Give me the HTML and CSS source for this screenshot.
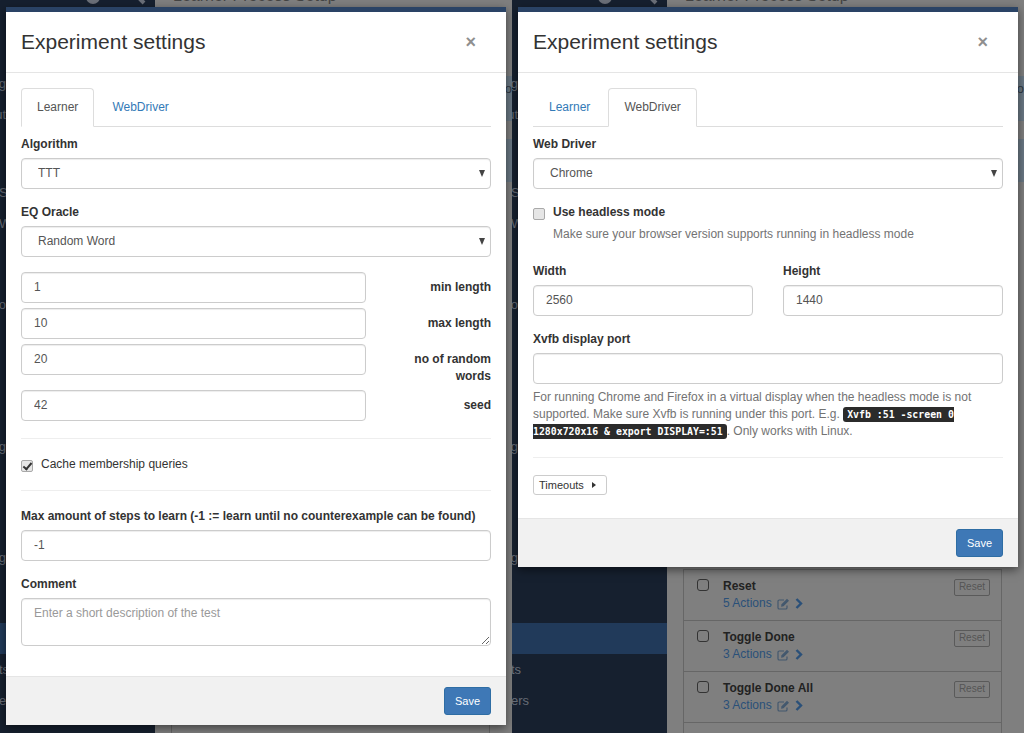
FILE: index.html
```html
<!DOCTYPE html>
<html lang="en">
<head>
    <meta charset="UTF-8">
    <meta name="viewport" content="width=device-width, initial-scale=1.0">
    <title>Experiment settings</title>
    <link rel="stylesheet" href="styles.css">
</head>
<body>
    <div class="page">
        <!-- learner tab -->
        <section class="screen">
            <div class="backdrop">
                <aside class="sidebar">
                    <div class="sidebar-icons">
                        <svg width="16" height="16" viewBox="0 0 16 16"><circle cx="8" cy="8" r="7" fill="#6a6f78"/><circle cx="8" cy="8" r="2.5" fill="#16202f"/></svg>
                        <svg width="16" height="16" viewBox="0 0 16 16"><path d="M2 2l12 12" stroke="#6a6f78" stroke-width="4" fill="none"/></svg>
                    </div>
                    <nav class="nav-group group-account">
                        <a class="nav-link">Learning</a>
                        <a class="nav-link">Logout</a>
                    </nav>
                    <nav class="nav-group group-setup">
                        <a class="nav-link nav-start">Settings</a>
                        <a class="nav-link nav-start">Web</a>
                    </nav>
                    <nav class="nav-group group-tools">
                        <a class="nav-link">Info</a>
                    </nav>
                    <nav class="nav-group group-model">
                        <a class="nav-link">Testing</a>
                    </nav>
                    <nav class="nav-group group-debug">
                        <a class="nav-link">Debug</a>
                    </nav>
                    <nav class="nav-group group-learner">
                        <a class="nav-link active">Setup</a>
                        <a class="nav-link nav-short">Results</a>
                        <a class="nav-link nav-long">Counters</a>
                    </nav>
                </aside>
                <main class="main">
                    <h2 class="page-title">Learner Process Setup</h2>
                    <div class="strip strip-top">Vo</div>
                    <div class="strip strip-bottom"></div>
                    <ul class="symbols">
                        <li class="symbol"><span class="symbol-check"></span><div class="symbol-body"><strong>Reset</strong><span class="symbol-actions">5 Actions</span></div><span class="symbol-reset">Reset</span></li>
                        <li class="symbol"><span class="symbol-check"></span><div class="symbol-body"><strong>Toggle Done</strong><span class="symbol-actions">3 Actions</span></div><span class="symbol-reset">Reset</span></li>
                        <li class="symbol"><span class="symbol-check"></span><div class="symbol-body"><strong>Toggle Done All</strong><span class="symbol-actions">3 Actions</span></div><span class="symbol-reset">Reset</span></li>
                        <li class="symbol"></li>
                    </ul>
                </main>
            </div>

            <div class="modal">
                <div class="modal-header">
                    <h4 class="modal-title">Experiment settings</h4>
                    <button class="close" type="button">&times;</button>
                </div>
                <div class="modal-body">
                    <ul class="tabs">
                        <li class="tab active">Learner</li>
                        <li class="tab">WebDriver</li>
                    </ul>
                    <div class="form-group">
                        <label class="field-label" for="algorithm">Algorithm</label>
                        <div class="select-wrap">
                            <select id="algorithm" class="control"><option>TTT</option></select>
                        </div>
                    </div>
                    <div class="form-group">
                        <label class="field-label" for="oracle">EQ Oracle</label>
                        <div class="select-wrap">
                            <select id="oracle" class="control"><option>Random Word</option></select>
                        </div>
                    </div>
                    <div class="param-rows">
                        <div class="param-row">
                            <input class="control" type="text" value="1">
                            <label class="param-label">min length</label>
                        </div>
                        <div class="param-row">
                            <input class="control" type="text" value="10">
                            <label class="param-label">max length</label>
                        </div>
                        <div class="param-row">
                            <input class="control" type="text" value="20">
                            <label class="param-label">no of random words</label>
                        </div>
                        <div class="param-row">
                            <input class="control" type="text" value="42">
                            <label class="param-label">seed</label>
                        </div>
                    </div>
                    <hr>
                    <label class="check-row">
                        <input class="check" type="checkbox" checked>
                        <span>Cache membership queries</span>
                    </label>
                    <hr>
                    <div class="form-group">
                        <label class="field-label" for="max-steps">Max amount of steps to learn (-1 := learn until no counterexample can be found)</label>
                        <input id="max-steps" class="control" type="text" value="-1">
                    </div>
                    <div class="form-group">
                        <label class="field-label" for="comment">Comment</label>
                        <textarea id="comment" class="control" placeholder="Enter a short description of the test"></textarea>
                    </div>
                </div>
                <div class="modal-footer">
                    <button class="btn-save" type="button">Save</button>
                </div>
            </div>
        </section>

        <!-- webdriver tab -->
        <section class="screen">
            <div class="backdrop">
                <aside class="sidebar">
                    <div class="sidebar-icons">
                        <svg width="16" height="16" viewBox="0 0 16 16"><circle cx="8" cy="8" r="7" fill="#6a6f78"/><circle cx="8" cy="8" r="2.5" fill="#16202f"/></svg>
                        <svg width="16" height="16" viewBox="0 0 16 16"><path d="M2 2l12 12" stroke="#6a6f78" stroke-width="4" fill="none"/></svg>
                    </div>
                    <nav class="nav-group group-account">
                        <a class="nav-link">Learning</a>
                        <a class="nav-link">Logout</a>
                    </nav>
                    <nav class="nav-group group-setup">
                        <a class="nav-link nav-start">Settings</a>
                        <a class="nav-link nav-start">Web</a>
                    </nav>
                    <nav class="nav-group group-tools">
                        <a class="nav-link">Info</a>
                    </nav>
                    <nav class="nav-group group-model">
                        <a class="nav-link">Testing</a>
                    </nav>
                    <nav class="nav-group group-debug">
                        <a class="nav-link">Debug</a>
                    </nav>
                    <nav class="nav-group group-learner">
                        <a class="nav-link active">Setup</a>
                        <a class="nav-link nav-short">Results</a>
                        <a class="nav-link nav-long">Counters</a>
                    </nav>
                </aside>
                <main class="main">
                    <h2 class="page-title">Learner Process Setup</h2>
                    <div class="strip strip-top">Vo</div>
                    <div class="strip strip-bottom"></div>
                    <ul class="symbols">
                        <li class="symbol">
                            <span class="symbol-check"></span>
                            <div class="symbol-body">
                                <strong>Reset</strong>
                                <span class="symbol-actions">5 Actions
                                    <svg class="icon-edit" width="13" height="12" viewBox="0 0 13 12"><path d="M10 7.5v2.2A1.3 1.3 0 0 1 8.7 11H2.3A1.3 1.3 0 0 1 1 9.7V3.3A1.3 1.3 0 0 1 2.3 2H7" fill="none" stroke="currentColor" stroke-width="1.2"/><path d="M4.5 6.2L10 .8l2 2-5.5 5.5-2.4.4z" fill="currentColor"/></svg>
                                    <svg class="icon-chevron" width="8" height="11" viewBox="0 0 8 11"><path d="M1.5 1l4.5 4.5L1.5 10" fill="none" stroke="currentColor" stroke-width="2.4"/></svg>
                                </span>
                            </div>
                            <span class="symbol-reset">Reset</span>
                        </li>
                        <li class="symbol">
                            <span class="symbol-check"></span>
                            <div class="symbol-body">
                                <strong>Toggle Done</strong>
                                <span class="symbol-actions">3 Actions
                                    <svg class="icon-edit" width="13" height="12" viewBox="0 0 13 12"><path d="M10 7.5v2.2A1.3 1.3 0 0 1 8.7 11H2.3A1.3 1.3 0 0 1 1 9.7V3.3A1.3 1.3 0 0 1 2.3 2H7" fill="none" stroke="currentColor" stroke-width="1.2"/><path d="M4.5 6.2L10 .8l2 2-5.5 5.5-2.4.4z" fill="currentColor"/></svg>
                                    <svg class="icon-chevron" width="8" height="11" viewBox="0 0 8 11"><path d="M1.5 1l4.5 4.5L1.5 10" fill="none" stroke="currentColor" stroke-width="2.4"/></svg>
                                </span>
                            </div>
                            <span class="symbol-reset">Reset</span>
                        </li>
                        <li class="symbol">
                            <span class="symbol-check"></span>
                            <div class="symbol-body">
                                <strong>Toggle Done All</strong>
                                <span class="symbol-actions">3 Actions
                                    <svg class="icon-edit" width="13" height="12" viewBox="0 0 13 12"><path d="M10 7.5v2.2A1.3 1.3 0 0 1 8.7 11H2.3A1.3 1.3 0 0 1 1 9.7V3.3A1.3 1.3 0 0 1 2.3 2H7" fill="none" stroke="currentColor" stroke-width="1.2"/><path d="M4.5 6.2L10 .8l2 2-5.5 5.5-2.4.4z" fill="currentColor"/></svg>
                                    <svg class="icon-chevron" width="8" height="11" viewBox="0 0 8 11"><path d="M1.5 1l4.5 4.5L1.5 10" fill="none" stroke="currentColor" stroke-width="2.4"/></svg>
                                </span>
                            </div>
                            <span class="symbol-reset">Reset</span>
                        </li>
                        <li class="symbol"></li>
                    </ul>
                </main>
            </div>

            <div class="modal">
                <div class="modal-header">
                    <h4 class="modal-title">Experiment settings</h4>
                    <button class="close" type="button">&times;</button>
                </div>
                <div class="modal-body">
                    <ul class="tabs">
                        <li class="tab">Learner</li>
                        <li class="tab active">WebDriver</li>
                    </ul>
                    <div class="form-group">
                        <label class="field-label" for="driver">Web Driver</label>
                        <div class="select-wrap">
                            <select id="driver" class="control"><option>Chrome</option></select>
                        </div>
                    </div>
                    <label class="check-row">
                        <input class="check" type="checkbox">
                        <strong>Use headless mode</strong>
                    </label>
                    <p class="help help-indent">Make sure your browser version supports running in headless mode</p>
                    <div class="size-row">
                        <div>
                            <label class="field-label" for="width">Width</label>
                            <input id="width" class="control" type="text" value="2560">
                        </div>
                        <div>
                            <label class="field-label" for="height">Height</label>
                            <input id="height" class="control" type="text" value="1440">
                        </div>
                    </div>
                    <div class="xvfb">
                        <label class="field-label" for="port">Xvfb display port</label>
                        <input id="port" class="control" type="text">
                        <p class="help">For running Chrome and Firefox in a virtual display when the headless mode is not supported. Make sure Xvfb is running under this port. E.g. <kbd>Xvfb :51 -screen 0 1280x720x16 &amp; export DISPLAY=:51</kbd>. Only works with Linux.</p>
                    </div>
                    <hr>
                    <button class="btn-timeouts" type="button">Timeouts <span class="caret-right"></span></button>
                </div>
                <div class="modal-footer">
                    <button class="btn-save" type="button">Save</button>
                </div>
            </div>
        </section>
    </div>
</body>
</html>
```

FILE: styles.css
```css
* {
    box-sizing: border-box;
}
body {
    margin: 0;
    font-family: "Liberation Sans", Arial, sans-serif;
    font-size: 12px;
    line-height: 17px;
    color: #333;
    background-color: #7f7f7f;
}
.page {
    display: flex;
    width: 1024px;
    height: 733px;
    overflow: hidden;
}
.screen {
    position: relative;
    width: 512px;
    height: 733px;
    overflow: hidden;
}

/* dimmed page behind the modal, the crop cuts the sidebar labels on the left */
.backdrop {
    display: flex;
    height: 100%;
}
.sidebar {
    width: 155px;
    height: 100%;
    flex-shrink: 0;
    background-color: #16202f;
    overflow: hidden;
}
.sidebar-icons {
    display: flex;
    gap: 29px;
    height: 0;
    margin-left: 85px;
    transform: translateY(-11px);
}
.nav-group {
    display: flex;
    flex-direction: column;
}
.group-account { margin-top: 68px; }
.group-setup { margin-top: 47px; }
.group-tools { margin-top: 50px; }
.group-model { margin-top: 111px; }
.group-debug { margin-top: 80px; }
.group-learner { margin-top: 50px; }
.nav-link {
    display: flex;
    justify-content: flex-end;
    height: 31px;
    padding-right: 149px;
    line-height: 31px;
    font-size: 13px;
    color: #666c76;
    white-space: nowrap;
}
.nav-link.nav-start {
    justify-content: flex-start;
    margin-left: -1px;
    padding-right: 0;
}
.nav-link.nav-short {
    padding-right: 146px;
}
.nav-link.nav-long {
    padding-right: 138px;
}
.nav-link.active {
    padding-right: 155px;
    background-color: #213a5a;
    color: #a5506a;
}
.main {
    flex: 1;
    min-width: 0;
    background-color: #7f7f7f;
    overflow: hidden;
}
.page-title {
    margin: -13px 0 0 18px;
    font-size: 16px;
    font-weight: normal;
    line-height: 18px;
    color: #444;
    white-space: nowrap;
}
.strip {
    margin-left: 16px;
    background-color: #6a7884;
    text-align: right;
    color: #2f3a46;
    line-height: 26px;
    font-size: 13px;
}
.strip-top {
    height: 45px;
    margin-top: 71px;
}
.strip-bottom {
    height: 43px;
    margin-top: 18px;
}
.symbols {
    width: 319px;
    margin: 387px 0 0 16px;
    padding: 0;
    list-style: none;
    border: 1px solid #666;
    border-bottom: 0;
}
.symbol {
    display: flex;
    align-items: flex-start;
    height: 51px;
    padding: 8px 11px 0 13px;
    border-bottom: 1px solid #666;
}
.symbol-check {
    width: 12px;
    height: 12px;
    margin-top: 1px;
    border: 1px solid #333;
    border-radius: 3px;
}
.symbol-body {
    display: flex;
    flex-direction: column;
    flex: 1;
    margin-left: 14px;
    color: #222;
}
.symbol-actions {
    display: flex;
    align-items: center;
    gap: 5px;
    color: #2a5079;
}
.icon-edit {
    color: #43586e;
}
.symbol-reset {
    display: block;
    height: 17px;
    margin-top: 1px;
    padding: 0 4px;
    border: 1px solid #5a5a5a;
    border-radius: 2px;
    font-size: 10px;
    line-height: 13px;
    color: #555;
}

/* modal */
.modal {
    position: absolute;
    top: 7px;
    left: 6px;
    width: 500px;
    background-color: #fff;
    border-top: 5px solid #2a4365;
    box-shadow: 0 3px 9px rgba(0, 0, 0, 0.5);
}
.modal-header {
    display: flex;
    align-items: center;
    justify-content: space-between;
    height: 61px;
    padding: 15px;
    border-bottom: 1px solid #e5e5e5;
}
.modal-title {
    margin: 0;
    font-size: 21px;
    font-weight: normal;
    line-height: 30px;
}
.close {
    margin-right: 15px;
    padding: 0;
    border: 0;
    background: none;
    font-family: inherit;
    font-size: 18px;
    font-weight: bold;
    line-height: 1;
    color: #8f8f8f;
}
.modal-body {
    padding: 15px;
}
.modal-footer {
    display: flex;
    justify-content: flex-end;
    padding: 10px 15px;
    background-color: #f1f1f1;
    border-top: 1px solid #e5e5e5;
}
.btn-save {
    height: 28px;
    padding: 0 10px;
    border: 1px solid #2e6da4;
    border-radius: 3px;
    background-color: #3e78b6;
    font-family: inherit;
    font-size: 11px;
    color: #fff;
}

/* tabs */
.tabs {
    display: flex;
    gap: 2px;
    height: 39px;
    margin: 0 0 9px;
    padding: 0;
    list-style: none;
    border-bottom: 1px solid #ddd;
}
.tab {
    height: 39px;
    padding: 10px 15px;
    border: 1px solid transparent;
    border-radius: 4px 4px 0 0;
    color: #337ab7;
}
.tab.active {
    background-color: #fff;
    border-color: #ddd #ddd #fff;
    color: #555;
}

/* form */
.form-group {
    margin-bottom: 15px;
}
.field-label {
    display: block;
    margin-bottom: 5px;
    font-weight: bold;
}
.control {
    display: block;
    width: 100%;
    height: 31px;
    padding: 6px 12px;
    border: 1px solid #ccc;
    border-radius: 4px;
    background-color: #fff;
    box-shadow: inset 0 1px 1px rgba(0, 0, 0, 0.075);
    font-family: inherit;
    font-size: 12px;
    color: #555;
}
input.control {
    padding: 5px 12px 6px;
}
textarea.control {
    height: 48px;
    padding-top: 7px;
    resize: vertical;
}
textarea.control::placeholder {
    color: #999;
}
select.control {
    padding: 4px 12px 6px 16px;
    appearance: none;
}
.select-wrap {
    position: relative;
}
.select-wrap::after {
    content: "";
    position: absolute;
    top: 12px;
    right: 6px;
    border-top: 7px solid #444;
    border-left: 3.5px solid transparent;
    border-right: 3.5px solid transparent;
}
.param-rows {
    display: flex;
    flex-direction: column;
    gap: 5px;
}
.param-row {
    display: flex;
    align-items: flex-start;
    gap: 30px;
}
.param-row .control {
    width: 345px;
    flex-shrink: 0;
}
.param-label {
    width: 95px;
    padding-top: 7px;
    font-weight: bold;
    text-align: right;
}
hr {
    margin: 17px 0;
    border: 0;
    border-top: 1px solid #eee;
}
.check-row {
    display: flex;
    align-items: flex-start;
    gap: 8px;
}
.check {
    position: relative;
    width: 12px;
    height: 12px;
    margin: 4px 0 0;
    flex-shrink: 0;
    appearance: none;
    background-color: #e6e6e6;
    border: 1px solid #a9a9a9;
    border-radius: 2px;
}
.check:checked::after {
    content: "";
    position: absolute;
    top: 0;
    left: 3px;
    width: 3px;
    height: 7px;
    border: solid #333;
    border-width: 0 2px 2px 0;
    transform: rotate(40deg);
}
.help {
    margin: 0;
    color: #737373;
}
.help-indent {
    margin: 5px 0 20px 20px;
}
.size-row {
    display: grid;
    grid-template-columns: 220px 220px;
    gap: 30px;
    margin-bottom: 15px;
}
.xvfb .help {
    margin-top: 5px;
}
kbd {
    padding: 2px 4px;
    border-radius: 3px;
    background-color: #2b2b2b;
    font-family: "DejaVu Sans Mono", monospace;
    font-size: 9.85px;
    font-weight: bold;
    color: #fff;
}
.btn-timeouts {
    display: block;
    height: 20px;
    margin-bottom: 8px;
    padding: 0 10px 0 5px;
    border: 1px solid #ccc;
    border-radius: 3px;
    background-color: #fff;
    font-family: inherit;
    font-size: 11px;
    color: #333;
}
.caret-right {
    display: inline-block;
    margin-left: 5px;
    vertical-align: 1px;
    border-left: 4px solid #333;
    border-top: 3.5px solid transparent;
    border-bottom: 3.5px solid transparent;
}
```
